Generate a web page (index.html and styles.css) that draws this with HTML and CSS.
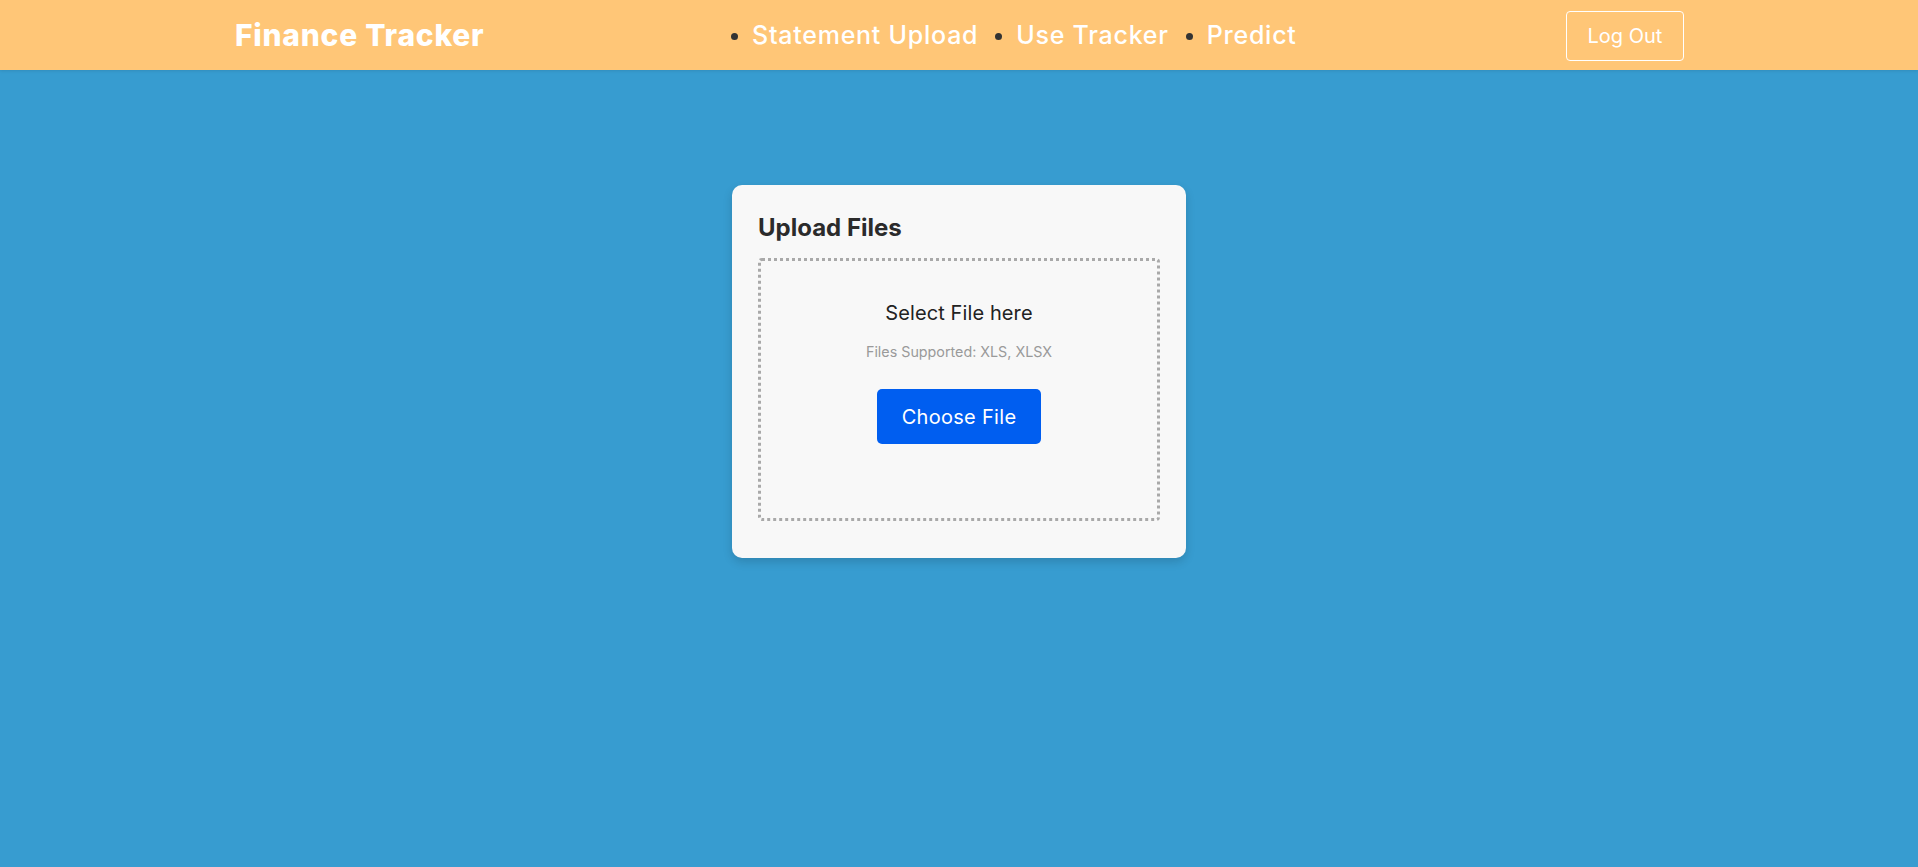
FILE: index.html
```html
<!DOCTYPE html>
<html lang="en">
<head>
<meta charset="utf-8">
<title>Finance Tracker</title>
<link rel="stylesheet" href="styles.css">
</head>
<body>
<header class="topbar">
  <div class="topbar-inner">
    <div class="brand">Finance Tracker</div>
    <ul class="nav">
      <li><a href="#">Statement Upload</a></li>
      <li><a href="#">Use Tracker</a></li>
      <li><a href="#">Predict</a></li>
    </ul>
    <div class="actions"><button class="logout">Log Out</button></div>
  </div>
</header>
<main class="main">
  <section class="card">
    <h2 class="card-title">Upload Files</h2>
    <div class="dropzone">
      <p class="drop-title">Select File here</p>
      <p class="drop-note">Files Supported: XLS, XLSX</p>
      <button class="choose">Choose File</button>
    </div>
  </section>
</main>
</body>
</html>
```
FILE: styles.css
```css
* { box-sizing: border-box; }
html, body { margin: 0; padding: 0; }
body {
  font-family: Inter, "Noto Sans", sans-serif;
  background: #379cd0;
  min-height: 867px;
}
.topbar {
  height: 70px;
  background: #ffc677;
  box-shadow: 0 1px 3px rgba(0,0,0,0.10);
}
.topbar-inner {
  width: 1450px;
  margin: 0 auto;
  height: 100%;
  display: grid;
  grid-template-columns: 497px auto 1fr;
  align-items: center;
}
.brand {
  color: #fff;
  font-weight: 800;
  font-size: 30px;
  letter-spacing: 0.75px;
  padding-left: 1px;
}
.nav {
  display: flex;
  align-items: center;
  gap: 17px;
  margin: 0;
  padding: 0;
  list-style: none;
}
.nav li {
  display: flex;
  align-items: center;
  font-size: 25px;
  font-weight: 500;
  letter-spacing: 0.75px;
}
.nav li::before {
  content: "";
  width: 7px;
  height: 7px;
  border-radius: 50%;
  background: #333;
  margin-right: 14px;
  margin-top: 2px;
}
.nav a {
  color: #fff;
  text-decoration: none;
}
.actions { display: flex; justify-content: flex-end; }
.logout {
  width: 118px;
  height: 50px;
  border: 1px solid #fff;
  border-radius: 4px;
  background: transparent;
  color: #fff;
  font-family: inherit;
  font-size: 20px;
  margin-top: 2px;
  cursor: pointer;
}
.main {
  display: flex;
  justify-content: center;
  padding-top: 115px;
}
.card {
  width: 454px;
  background: #f8f8f8;
  border-radius: 10px;
  padding: 27px 26px 37px;
  box-shadow: 0 4px 10px rgba(0,0,0,0.15);
}
.card-title {
  margin: 0 0 14px;
  font-size: 24px;
  line-height: 32px;
  font-weight: 700;
  color: #2b2b2b;
}
.dropzone {
  height: 263px;
  border: 3px dotted #a9a9a9;
  border-radius: 4px;
  display: flex;
  flex-direction: column;
  align-items: center;
  padding-top: 40px;
}
.drop-title {
  margin: 0;
  font-size: 20px;
  line-height: 24px;
  letter-spacing: 0.1px;
  color: #222;
}
.drop-note {
  margin: 18px 0 0;
  font-size: 14.3px;
  line-height: 18px;
  color: #9a9a9a;
}
.choose {
  margin-top: 28px;
  width: 164px;
  height: 55px;
  border: none;
  border-radius: 5px;
  background: #005ef0;
  color: #fff;
  font-family: inherit;
  font-size: 20px;
  letter-spacing: 0.3px;
  cursor: pointer;
}
```
